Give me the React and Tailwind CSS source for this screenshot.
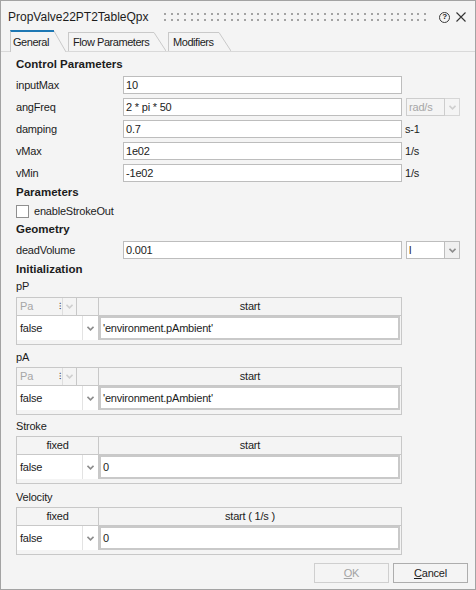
import React from 'react';

const Arrow = ({ faded }) => (
    <svg width="7" height="5" viewBox="0 0 7 5">
        <path d="M0.5 0.8 L3.5 3.8 L6.5 0.8" fill="none" stroke={faded ? '#cfcfcf' : '#8d8d8d'} strokeWidth="1.6" />
    </svg>
);

const Grip = () => {
    const dots = [];
    for (let i = 0; i < 40; i++) {
        const x = Math.round(i * 6.67);
        dots.push(<rect key={'a' + i} x={x} y="0" width="2" height="2" fill="#a3a3a3" />);
        dots.push(<rect key={'b' + i} x={x} y="6" width="2" height="2" fill="#a3a3a3" />);
    }
    return (
        <svg width="266" height="8" viewBox="0 0 266 8" shapeRendering="crispEdges">
            {dots}
        </svg>
    );
};

const Tab = ({ label, active, width, pad }) => (
    <div className={`flex items-stretch ${active ? 'h-[22px] -mb-px bg-[#f4f4f4]' : 'h-[19px]'}`}>
        <div
            className={`${width} ${pad} flex items-center tracking-[-0.45px] border-l border-[#c9c9c9] ${active ? 'border-t-2 border-t-[#1e78b4]' : 'border-t'}`}
        >
            {label}
        </div>
        <svg width="12" height={active ? 22 : 19} viewBox={`0 0 12 ${active ? 22 : 19}`}>
            {active && <path d="M0 0 H2 L12 22 H0 Z" fill="#f4f4f4" />}
            <path d={active ? 'M0 1 L12 22' : 'M0 0.5 L12 19'} stroke="#c9c9c9" strokeWidth="1" fill="none" />
        </svg>
    </div>
);

const SectionTitle = ({ children, h = 'h-[18px]' }) => (
    <div className={`${h} flex items-center font-bold text-[11.5px] tracking-normal`}>{children}</div>
);

const UnitCombo = ({ text, disabled }) => (
    <div className="ml-[4px] flex h-[18px]">
        <div
            className={`w-[39px] border flex items-center px-[2px] ${disabled ? 'border-[#cdcdcd] bg-[#f4f4f4] text-[#a6a6a6]' : 'border-[#bdbdbd] bg-white'}`}
        >
            {text}
        </div>
        <div
            className={`w-[15px] border border-l-0 flex items-center justify-center ${disabled ? 'border-[#d6d6d6] bg-[#f4f4f4]' : 'border-[#bdbdbd] bg-[#f0f0f0]'}`}
        >
            <Arrow faded={disabled} />
        </div>
    </div>
);

const FieldRow = ({ label, value, unit, combo }) => (
    <div className="h-[22px] flex items-center">
        <div className="w-[107px]">{label}</div>
        <div className="w-[279px] h-[18px] bg-white border border-[#bdbdbd] flex items-center px-[2px]">{value}</div>
        {unit && <span className="ml-[3px]">{unit}</span>}
        {combo}
    </div>
);

const InitTable = ({ header, startLabel, value, mb = 'mb-[4px]' }) => (
    <div className={`w-[386px] border border-[#c8c8c8] ${mb}`}>
        <div className="h-[18px] flex border-b border-[#c8c8c8]">
            {header}
            <div className="flex-1 border-l border-[#c8c8c8] flex items-center justify-center">{startLabel}</div>
        </div>
        <div className="h-[24px] flex">
            <div className="w-[66px] bg-white border-r border-[#e3e3e3] flex items-center pl-[3px]">false</div>
            <div className="w-[15px] bg-white flex items-center justify-center">
                <Arrow />
            </div>
            <div className="w-px bg-[#c8c8c8]" />
            <div className="w-[301px] bg-white border-2 border-[#c9c9c9] flex items-center pl-[2px]">{value}</div>
        </div>
        <div className="h-[4px]" />
    </div>
);

const UnitHeader = () => (
    <>
        <div className="w-[45px] flex items-center justify-between pl-[3px] text-[#a6a6a6]">
            <span>Pa</span>
            <span className="text-[#333] text-[9px] leading-none pr-[1px]">⁝</span>
        </div>
        <div className="w-[14px] border-l border-[#dedede] flex items-center justify-center">
            <Arrow faded />
        </div>
        <div className="w-[22px] border-l border-[#c8c8c8]" />
    </>
);

const FixedHeader = () => (
    <div className="w-[81px] flex items-center justify-center">fixed</div>
);

const App = () => {
    return (
        <div className="w-[476px] h-[590px] border border-[#a3a3a3] bg-[#f4f4f4] flex flex-col font-['Liberation_Sans',Arial,sans-serif] text-[11px] tracking-[-0.2px] text-[#1c1c1c]">
            {/* title bar */}
            <div className="h-[29px] pt-[3px] flex items-center pl-[7px] pr-[9px]">
                <span className="text-[12px] tracking-normal">PropValve22PT2TableQpx</span>
                <div className="ml-[15px] flex items-center">
                    <Grip />
                </div>
                <div className="ml-auto flex items-center gap-[6px]">
                    <span className="w-[11px] h-[11px] rounded-full border border-[#3a3a3a] flex items-center justify-center text-[8px] font-bold leading-none">?</span>
                    <svg width="10" height="10" viewBox="0 0 10 10">
                        <path d="M0.5 0.5 L9.5 9.5 M9.5 0.5 L0.5 9.5" stroke="#333" strokeWidth="1.1" />
                    </svg>
                </div>
            </div>

            {/* tabs */}
            <div className="h-[22px] flex items-end pl-[9px] border-b border-[#d9d9d9]">
                <Tab label="General" active width="w-[44px]" pad="pl-[2px]" />
                <div className="ml-[2px]">
                    <Tab label="Flow Parameters" width="w-[86px]" pad="pl-[4px]" />
                </div>
                <div className="ml-[2px]">
                    <Tab label="Modifiers" width="w-[51px]" pad="pl-[4px]" />
                </div>
            </div>

            {/* general tab content */}
            <div className="flex-1 flex flex-col pl-[15px] pt-[4px]">
                <SectionTitle>Control Parameters</SectionTitle>
                <FieldRow label="inputMax" value="10" />
                <FieldRow label="angFreq" value="2 * pi * 50" combo={<UnitCombo text="rad/s" disabled />} />
                <FieldRow label="damping" value="0.7" unit="s-1" />
                <FieldRow label="vMax" value="1e02" unit="1/s" />
                <FieldRow label="vMin" value="-1e02" unit="1/s" />

                <SectionTitle>Parameters</SectionTitle>
                <div className="h-[19px] flex items-center">
                    <div className="w-[13px] h-[13px] border border-[#8f8f8f] bg-white" />
                    <span className="ml-[5px]">enableStrokeOut</span>
                </div>

                <SectionTitle>Geometry</SectionTitle>
                <FieldRow label="deadVolume" value="0.001" combo={<UnitCombo text="l" />} />

                <SectionTitle>Initialization</SectionTitle>
                <div className="h-[18px] leading-[15px]">pP</div>
                <InitTable header={<UnitHeader />} startLabel="start" value="'environment.pAmbient'" />
                <div className="h-[18px] leading-[17px]">pA</div>
                <InitTable header={<UnitHeader />} startLabel="start" value="'environment.pAmbient'" mb="mb-[3px]" />
                <div className="h-[18px] leading-[17px]">Stroke</div>
                <InitTable header={<FixedHeader />} startLabel="start" value="0" mb="mb-[5px]" />
                <div className="h-[18px] leading-[17px]">Velocity</div>
                <InitTable header={<FixedHeader />} startLabel="start ( 1/s )" value="0" />

                <div className="mt-auto pb-[6px] pr-[7px] flex justify-end gap-[4px]">
                    <button className="w-[75px] h-[20px] border border-[#cfcfcf] bg-[#f4f4f4] text-[#a3a3a3] text-[11px]">
                        <span className="underline">O</span>K
                    </button>
                    <button className="w-[75px] h-[20px] border border-[#adadad] bg-[#f4f4f4] text-[11px]">
                        <span className="underline">C</span>ancel
                    </button>
                </div>
            </div>
        </div>
    );
};

export default App;
